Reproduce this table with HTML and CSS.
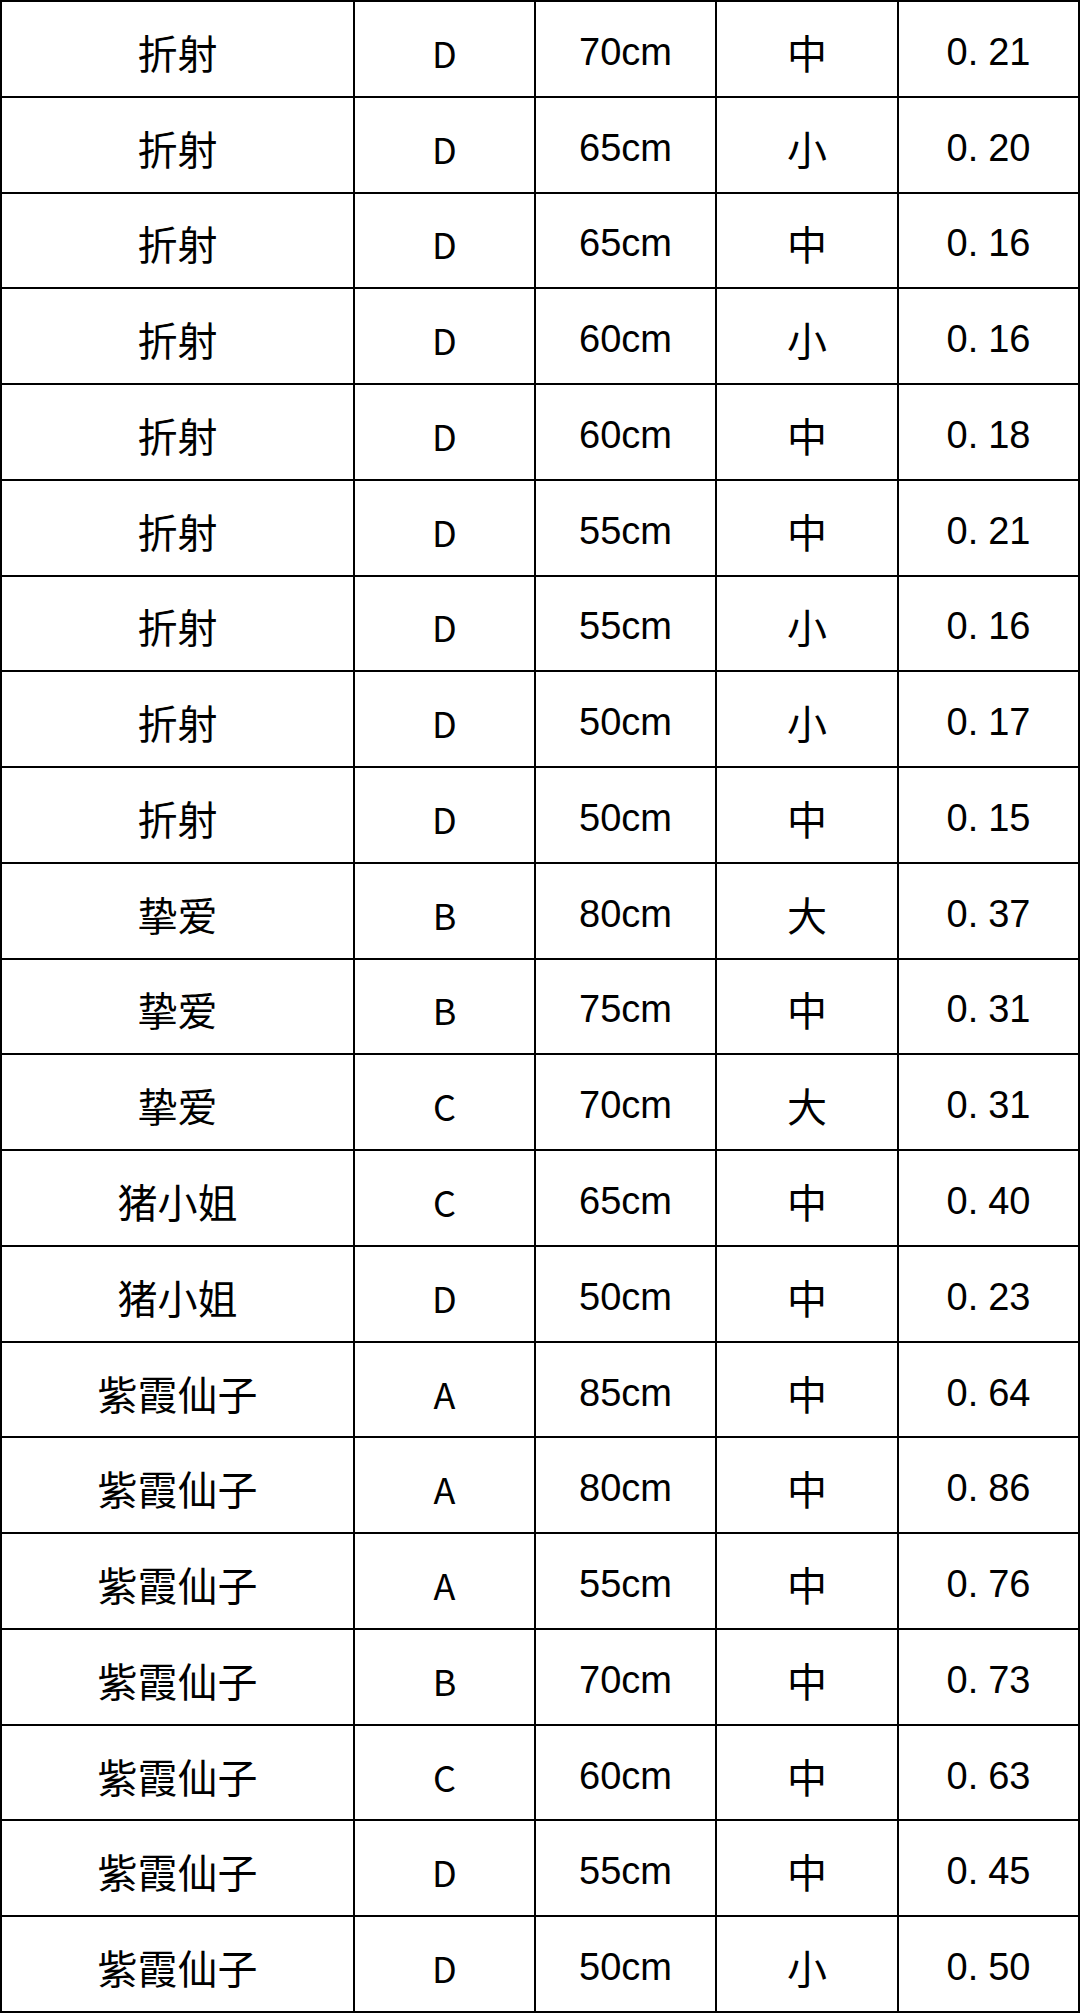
FILE: index.html
```html
<!DOCTYPE html>
<html lang="zh-CN">
<head>
<meta charset="utf-8">
<title>尺寸表</title>
<link rel="stylesheet" href="styles.css">
</head>
<body>
<div class="table">
  <div class="c name">折射</div><div class="c grade">D</div><div class="c num">70cm</div><div class="c size">中</div><div class="c num">0<span class="dot">.</span>21</div>
  <div class="c name">折射</div><div class="c grade">D</div><div class="c num">65cm</div><div class="c size">小</div><div class="c num">0<span class="dot">.</span>20</div>
  <div class="c name">折射</div><div class="c grade">D</div><div class="c num">65cm</div><div class="c size">中</div><div class="c num">0<span class="dot">.</span>16</div>
  <div class="c name">折射</div><div class="c grade">D</div><div class="c num">60cm</div><div class="c size">小</div><div class="c num">0<span class="dot">.</span>16</div>
  <div class="c name">折射</div><div class="c grade">D</div><div class="c num">60cm</div><div class="c size">中</div><div class="c num">0<span class="dot">.</span>18</div>
  <div class="c name">折射</div><div class="c grade">D</div><div class="c num">55cm</div><div class="c size">中</div><div class="c num">0<span class="dot">.</span>21</div>
  <div class="c name">折射</div><div class="c grade">D</div><div class="c num">55cm</div><div class="c size">小</div><div class="c num">0<span class="dot">.</span>16</div>
  <div class="c name">折射</div><div class="c grade">D</div><div class="c num">50cm</div><div class="c size">小</div><div class="c num">0<span class="dot">.</span>17</div>
  <div class="c name">折射</div><div class="c grade">D</div><div class="c num">50cm</div><div class="c size">中</div><div class="c num">0<span class="dot">.</span>15</div>
  <div class="c name">挚爱</div><div class="c grade">B</div><div class="c num">80cm</div><div class="c size">大</div><div class="c num">0<span class="dot">.</span>37</div>
  <div class="c name">挚爱</div><div class="c grade">B</div><div class="c num">75cm</div><div class="c size">中</div><div class="c num">0<span class="dot">.</span>31</div>
  <div class="c name">挚爱</div><div class="c grade">C</div><div class="c num">70cm</div><div class="c size">大</div><div class="c num">0<span class="dot">.</span>31</div>
  <div class="c name">猪小姐</div><div class="c grade">C</div><div class="c num">65cm</div><div class="c size">中</div><div class="c num">0<span class="dot">.</span>40</div>
  <div class="c name">猪小姐</div><div class="c grade">D</div><div class="c num">50cm</div><div class="c size">中</div><div class="c num">0<span class="dot">.</span>23</div>
  <div class="c name">紫霞仙子</div><div class="c grade">A</div><div class="c num">85cm</div><div class="c size">中</div><div class="c num">0<span class="dot">.</span>64</div>
  <div class="c name">紫霞仙子</div><div class="c grade">A</div><div class="c num">80cm</div><div class="c size">中</div><div class="c num">0<span class="dot">.</span>86</div>
  <div class="c name">紫霞仙子</div><div class="c grade">A</div><div class="c num">55cm</div><div class="c size">中</div><div class="c num">0<span class="dot">.</span>76</div>
  <div class="c name">紫霞仙子</div><div class="c grade">B</div><div class="c num">70cm</div><div class="c size">中</div><div class="c num">0<span class="dot">.</span>73</div>
  <div class="c name">紫霞仙子</div><div class="c grade">C</div><div class="c num">60cm</div><div class="c size">中</div><div class="c num">0<span class="dot">.</span>63</div>
  <div class="c name">紫霞仙子</div><div class="c grade">D</div><div class="c num">55cm</div><div class="c size">中</div><div class="c num">0<span class="dot">.</span>45</div>
  <div class="c name">紫霞仙子</div><div class="c grade">D</div><div class="c num">50cm</div><div class="c size">小</div><div class="c num">0<span class="dot">.</span>50</div>
</div>
</body>
</html>
```

FILE: styles.css
```css
html, body {
  margin: 0;
  padding: 0;
  background: #fff;
}

.table {
  box-sizing: border-box;
  width: 1080px;
  height: 2013px;
  border-left: 2px solid #000;
  border-top: 2px solid #000;
  display: grid;
  grid-template-columns: 353px 181px 181px 182px 1fr;
  grid-template-rows: repeat(21, 1fr);
  color: #000;
}

.c {
  box-sizing: border-box;
  border-right: 2px solid #000;
  border-bottom: 2px solid #000;
  display: flex;
  align-items: center;
  justify-content: center;
  padding-top: 6px;
  font-family: "Noto Sans CJK SC", sans-serif;
  font-size: 40px;
  line-height: 1;
}

.name, .size {
  font-family: "Noto Sans CJK SC", sans-serif;
  font-size: 40px;
}

.grade {
  font-family: "Noto Sans CJK SC", sans-serif;
  font-size: 36px;
}

.num {
  font-family: "Liberation Sans", Arial, sans-serif;
  font-size: 38px;
}

.dot {
  margin-right: 10px;
}
```
